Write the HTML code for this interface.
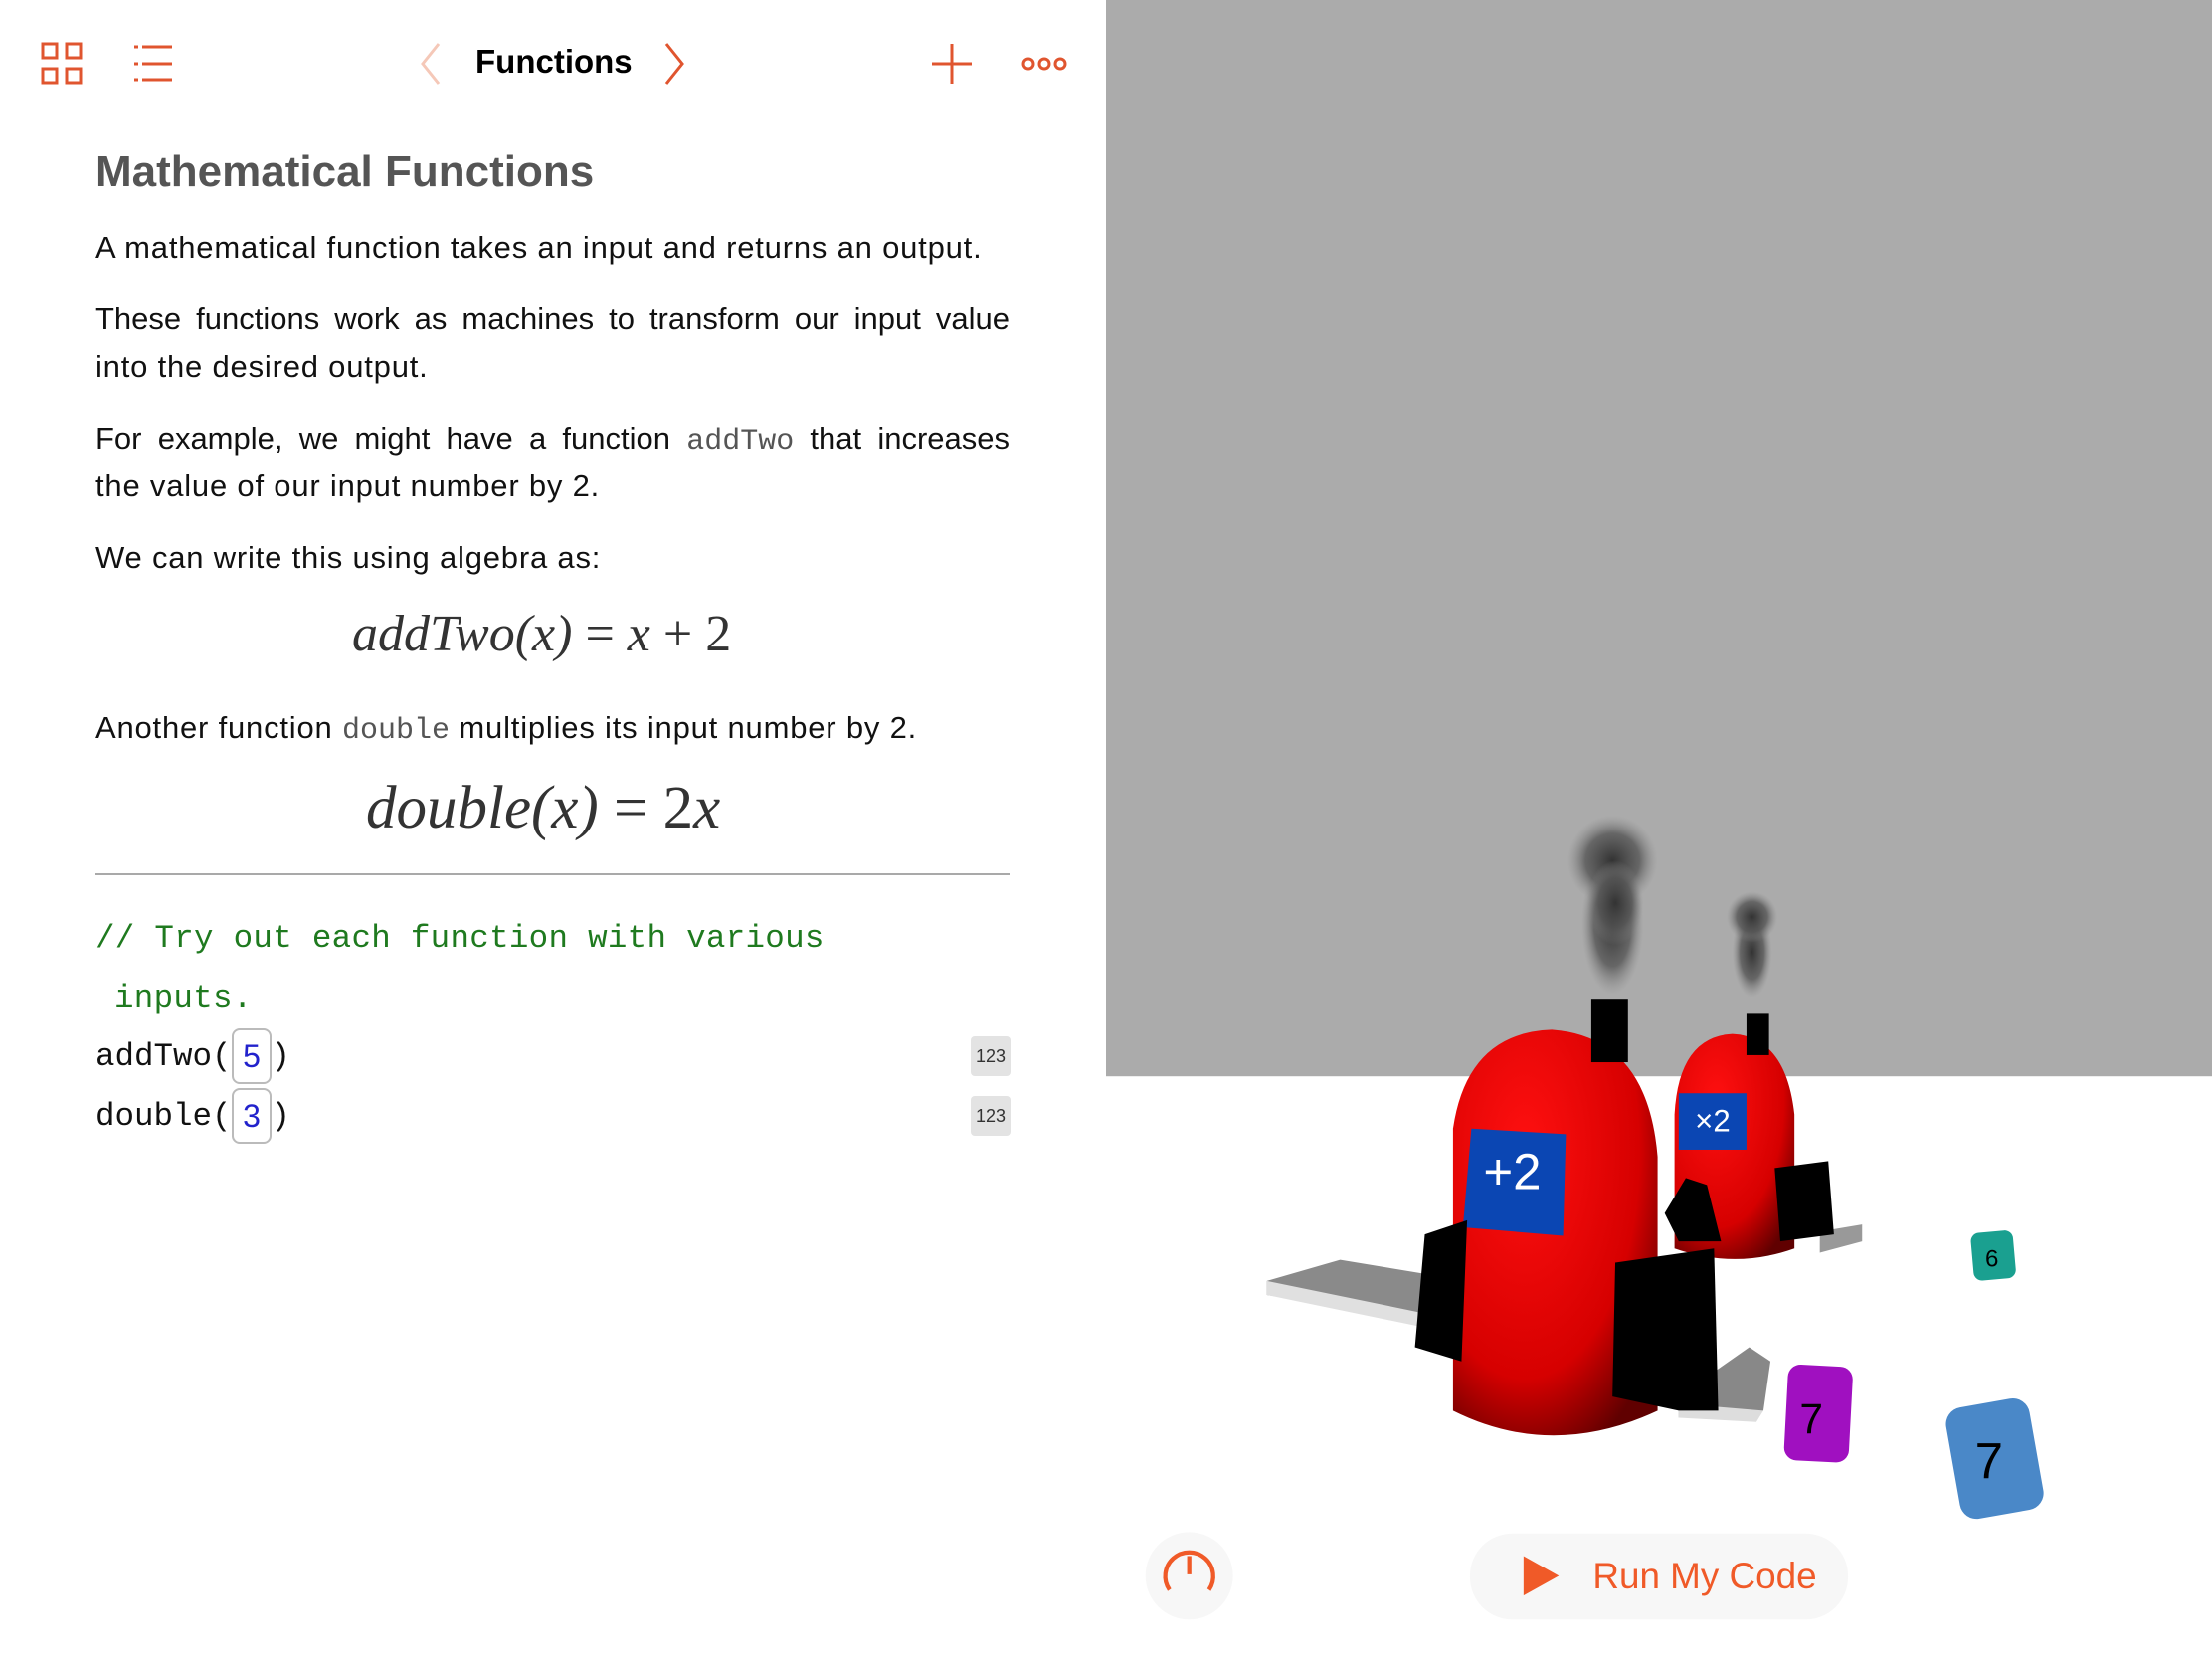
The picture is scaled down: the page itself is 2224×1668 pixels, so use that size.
<!DOCTYPE html>
<html><head><meta charset="utf-8"><style>
*{margin:0;padding:0;box-sizing:border-box}
body{width:2224px;height:1668px;position:relative;background:#fff;font-family:"Liberation Sans",sans-serif;overflow:hidden}
.a{position:absolute;white-space:nowrap}
.p{font-size:31px;color:#111;left:96px;width:919px;line-height:40px;letter-spacing:0.8px}
.j{text-align:justify;text-align-last:justify;letter-spacing:0}
.c{font-family:"Liberation Mono",monospace;color:#555;font-size:30px;letter-spacing:0}
.m{font-family:"Liberation Serif",serif;font-style:italic;color:#333}
.mono{font-family:"Liberation Mono",monospace;font-size:32.5px}
.g{color:#1f7a1f}
.box{position:absolute;border:2px solid #bbb;border-radius:8px;width:40px;height:56px;color:#2222cc;font-family:"Liberation Sans",sans-serif;font-size:32px;text-align:center;line-height:52px}
.badge{position:absolute;left:976px;width:40px;height:40px;background:#e3e3e3;border-radius:4px;font-size:18px;color:#333;text-align:center;line-height:40px}
</style></head><body>
<svg class="a" style="left:0;top:0" width="1112" height="110" viewBox="0 0 1112 110">
<g fill="none" stroke="#e0552f" stroke-width="3">
<rect x="43" y="44" width="14" height="14"/><rect x="67" y="44" width="14" height="14"/>
<rect x="43" y="69" width="14" height="14"/><rect x="67" y="69" width="14" height="14"/>
<line x1="143" y1="47" x2="173" y2="47"/><line x1="143" y1="64" x2="173" y2="64"/><line x1="143" y1="80" x2="173" y2="80"/>
<line x1="135" y1="47" x2="139" y2="47"/><line x1="135" y1="64" x2="139" y2="64"/><line x1="135" y1="80" x2="139" y2="80"/>
<polyline points="441,44 425,64 441,84" stroke="#f5c8b8"/>
<polyline points="670,44 686,64 670,84"/>
<line x1="957" y1="44" x2="957" y2="84"/><line x1="937" y1="64" x2="977" y2="64"/>
<circle cx="1034" cy="64" r="5"/><circle cx="1050" cy="64" r="5"/><circle cx="1066" cy="64" r="5"/>
</g></svg>
<div class="a" style="left:478px;top:43px;font-size:33px;color:#000;font-weight:bold">Functions</div>

<div class="a" style="left:96px;top:148px;font-size:44px;color:#555;font-weight:bold">Mathematical Functions</div>
<div class="a p" style="top:229px">A mathematical function takes an input and returns an output.</div>
<div class="a p j" style="top:301px">These functions work as machines to transform our input value</div>
<div class="a p" style="top:349px">into the desired output.</div>
<div class="a p j" style="top:421px">For example, we might have a function <span class="c">addTwo</span> that increases</div>
<div class="a p" style="top:469px">the value of our input number by 2.</div>
<div class="a p" style="top:541px">We can write this using algebra as:</div>
<div class="a m" style="left:354px;top:608px;font-size:52px">addTwo(x) <span style="font-style:normal">= </span>x<span style="font-style:normal"> + 2</span></div>
<div class="a p" style="top:712px">Another function <span class="c">double</span> multiplies its input number by 2.</div>
<div class="a m" style="left:368px;top:778px;font-size:61px">double(x) <span style="font-style:normal">= 2</span>x</div>
<div class="a" style="left:96px;top:878px;width:919px;height:2px;background:#a9a9a9"></div>

<div class="a mono g" style="left:96px;top:925px;letter-spacing:0.3px">// Try out each function with various</div>
<div class="a mono g" style="left:115px;top:985px;letter-spacing:0.3px">inputs.</div>
<div class="a mono" style="left:96px;top:1044px;color:#111">addTwo(<span style="display:inline-block;width:40px"></span>)</div>
<div class="box" style="left:233px;top:1034px">5</div>
<div class="a mono" style="left:96px;top:1104px;color:#111">double(<span style="display:inline-block;width:40px"></span>)</div>
<div class="box" style="left:233px;top:1094px">3</div>
<div class="badge" style="top:1042px">123</div>
<div class="badge" style="top:1102px">123</div>

<svg class="a" style="left:1112px;top:0" width="1112" height="1668" viewBox="784 0 784 1176">
<defs>
<radialGradient id="r1" cx="0.35" cy="0.3" r="0.8"><stop offset="0" stop-color="#ff1010"/><stop offset="0.7" stop-color="#d60000"/><stop offset="1" stop-color="#600000"/></radialGradient>
<radialGradient id="sm" cx="0.5" cy="0.5" r="0.5"><stop offset="0" stop-color="#333"/><stop offset="0.6" stop-color="#555" stop-opacity="0.8"/><stop offset="1" stop-color="#888" stop-opacity="0"/></radialGradient>
</defs>
<rect x="784" y="0" width="784" height="763" fill="#ababab"/>
<polygon points="898,908 950,893 1010,903 1005,935 898,918" fill="#8a8a8a"/>
<polygon points="898,908 1005,930 1005,940 898,918" fill="#e0e0e0"/>
<polygon points="1190,990 1240,955 1255,965 1250,1000 1190,1005" fill="#888"/>
<polygon points="1190,995 1250,1000 1245,1008 1190,1005" fill="#ddd"/>
<polygon points="1290,873 1320,868 1320,880 1290,888" fill="#999"/>
<path d="M1187,885 L1187,790 Q1190,735 1228,733 Q1266,735 1272,790 L1272,885 Q1230,900 1187,885 Z" fill="url(#r1)"/>
<rect x="1238" y="718" width="16" height="30" fill="#000"/>
<rect x="1190" y="775" width="48" height="40" fill="#0b46b3"/>
<text x="1214" y="802" font-size="22" fill="#fff" text-anchor="middle" font-family="Liberation Sans">×2</text>
<polygon points="1258,828 1296,823 1300,875 1262,880" fill="#000"/>
<polygon points="1180,860 1195,835 1210,840 1220,880 1190,880" fill="#000"/>
<ellipse cx="1242" cy="675" rx="14" ry="32" fill="url(#sm)"/>
<ellipse cx="1242" cy="650" rx="18" ry="18" fill="url(#sm)"/>
<ellipse cx="1143" cy="655" rx="22" ry="50" fill="url(#sm)"/>
<ellipse cx="1143" cy="610" rx="32" ry="32" fill="url(#sm)"/>
<ellipse cx="1145" cy="640" rx="20" ry="30" fill="url(#sm)"/>
<path d="M1030,1000 L1030,800 Q1040,732 1100,730 Q1168,735 1175,820 L1175,1000 Q1100,1035 1030,1000 Z" fill="url(#r1)"/>
<rect x="1128" y="708" width="26" height="45" fill="#000"/>
<polygon points="1043,800 1110,804 1108,876 1037,870" fill="#0b46b3"/>
<text x="1072" y="843" font-size="36" fill="#fff" text-anchor="middle" font-family="Liberation Sans">+2</text>
<polygon points="1010,875 1040,865 1036,965 1003,955" fill="#000"/>
<polygon points="1145,895 1215,885 1218,1000 1190,1000 1143,990" fill="#000"/>
<rect x="1398" y="873" width="30" height="34" rx="6" fill="#1aa090" transform="rotate(-5 1413 890)"/>
<text x="1412" y="898" font-size="17" text-anchor="middle" font-family="Liberation Sans">6</text>
<rect x="1266" y="968" width="46" height="68" rx="9" fill="#a010c0" transform="rotate(3 1289 1002)"/>
<text x="1284" y="1016" font-size="30" text-anchor="middle" font-family="Liberation Sans">7</text>
<rect x="1384" y="994" width="60" height="80" rx="12" fill="#4a88c8" transform="rotate(-10 1414 1034)"/>
<text x="1410" y="1048" font-size="36" text-anchor="middle" font-family="Liberation Sans">7</text>
<circle cx="843" cy="1117" r="31" fill="#f7f7f7"/>
<path d="M829,1127 A17,17 0 1 1 857,1127" fill="none" stroke="#f05a28" stroke-width="3"/>
<line x1="843" y1="1103" x2="843" y2="1116" stroke="#f05a28" stroke-width="3"/>
<rect x="1042" y="1087" width="268" height="61" rx="30" fill="#f7f7f7"/>
<polygon points="1080,1103 1105,1117 1080,1131" fill="#f05a28"/>
<text x="1129" y="1126" font-size="26" fill="#f05a28" font-family="Liberation Sans">Run My Code</text>
</svg>
</body></html>
